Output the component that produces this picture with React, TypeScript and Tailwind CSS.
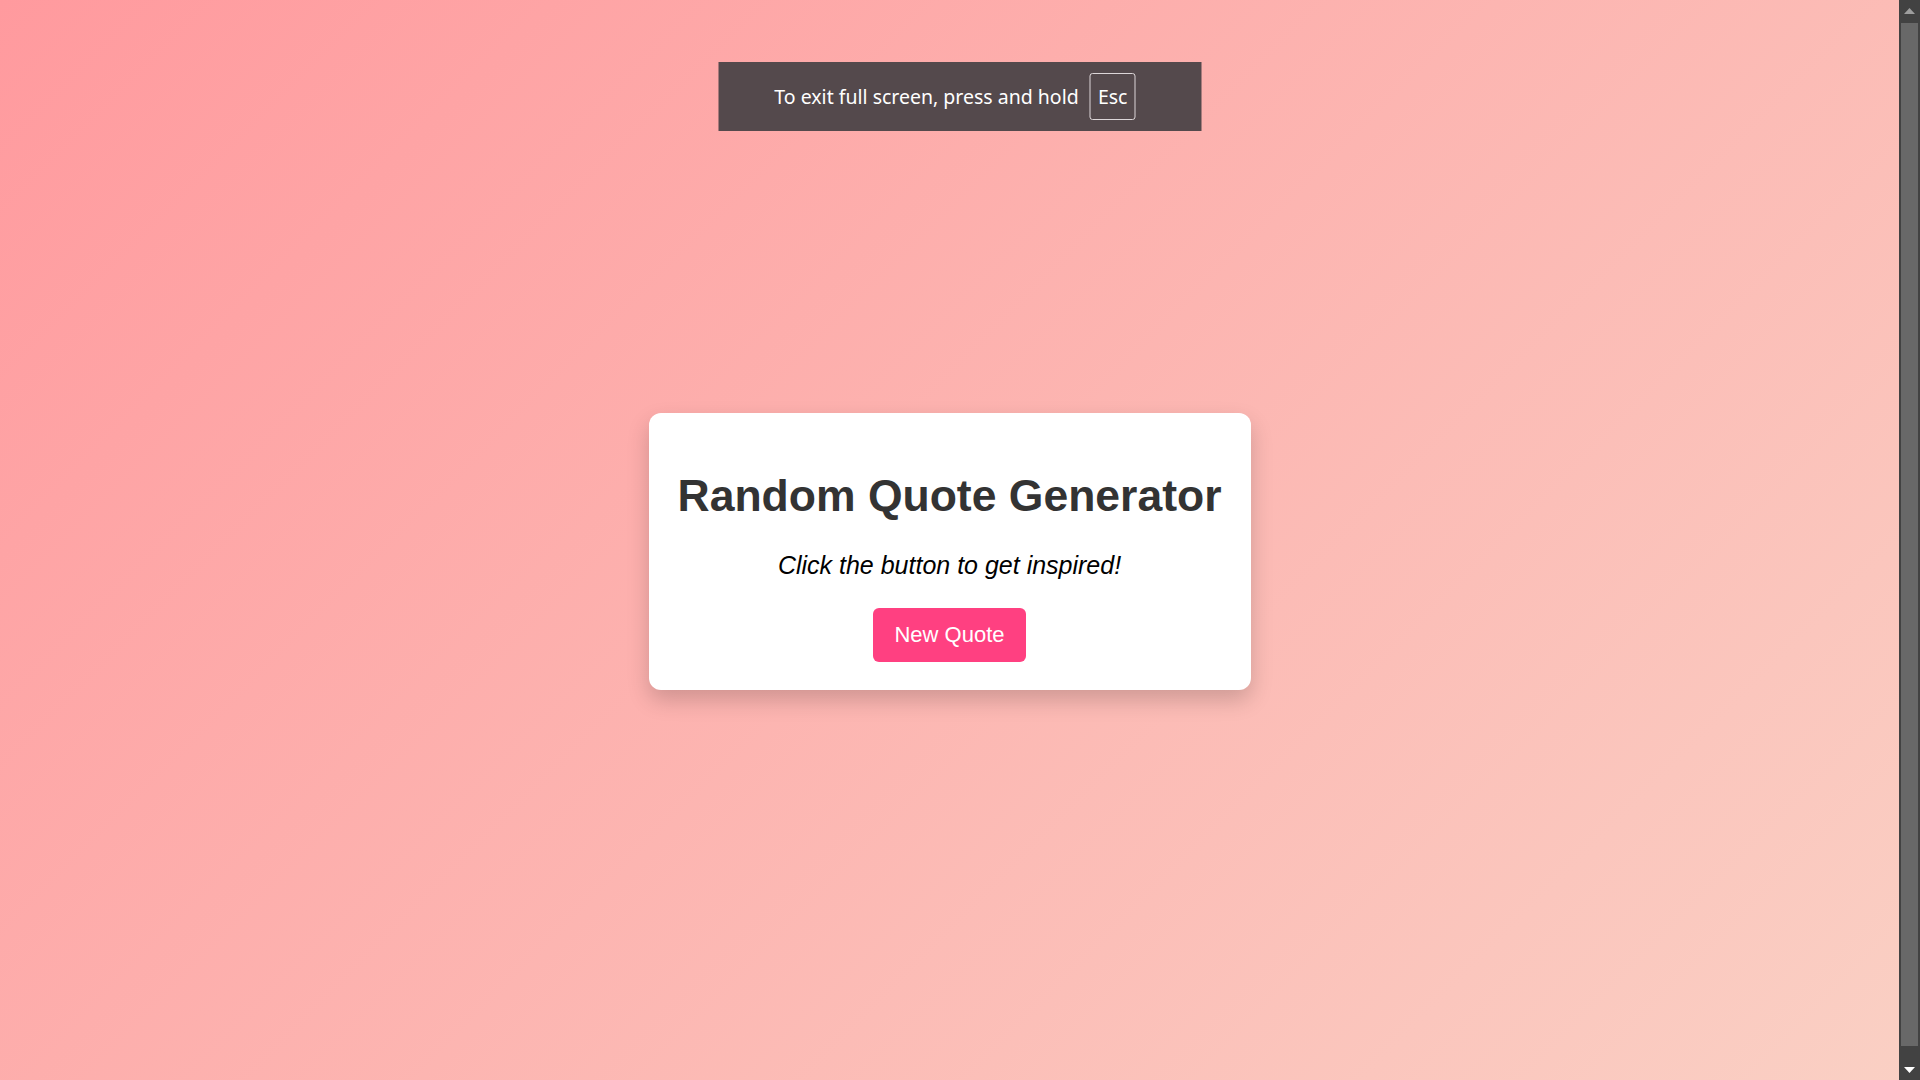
import React, { useState } from 'react';

const quotes = [
  { text: "The best way to get started is to quit talking and begin doing.", author: "Walt Disney" },
  { text: "Don't let yesterday take up too much of today.", author: "Will Rogers" },
  { text: "It's not whether you get knocked down, it's whether you get up.", author: "Vince Lombardi" },
  { text: "If you are working on something exciting, it will keep you motivated.", author: "Steve Jobs" },
];

// browser fullscreen notice drawn over the page
const FullscreenNotice: React.FC = () => (
  <div className="absolute left-1/2 top-[62px] -translate-x-1/2 w-[483px] h-[69px] bg-[#54494c] flex items-center justify-center gap-[11px] pr-[10px] font-['Noto_Sans',sans-serif] text-[19.5px] text-white">
    <span>To exit full screen, press and hold</span>
    <span className="w-[46px] h-[47px] border border-[#dcd6d8] rounded-[3px] flex items-center justify-center">Esc</span>
  </div>
);

const Scrollbar: React.FC = () => (
  <div className="w-[21px] h-full bg-[#424242] flex flex-col shrink-0">
    <div className="h-[21px] flex items-center justify-center">
      <svg width="11" height="6" viewBox="0 0 11 6"><path d="M5.5 0L11 6H0z" fill="#9e9e9e" /></svg>
    </div>
    <div className="flex-1 px-[2px] pt-[2px] pb-[13px]">
      <div className="h-full bg-[#686868]" />
    </div>
    <div className="h-[21px] flex items-center justify-center">
      <svg width="11" height="6" viewBox="0 0 11 6"><path d="M0 0H11L5.5 6z" fill="#ffffff" /></svg>
    </div>
  </div>
);

const App: React.FC = () => {
  const [quote, setQuote] = useState<{ text: string; author: string } | null>(null);

  const newQuote = () => {
    setQuote(quotes[Math.floor(Math.random() * quotes.length)]);
  };

  return (
    <div className="relative h-screen w-full flex overflow-hidden font-['Liberation_Sans',Arial,sans-serif]">
      <div className="flex-1 overflow-hidden">
        <div className="h-[1102px] bg-[linear-gradient(135deg,#ff9a9e_0%,#fad0c4_100%)] flex items-center justify-center">
          <div className="w-[602px] bg-white rounded-[12px] shadow-[0_10px_22px_rgba(0,0,0,0.18)] pt-[57px] pb-[28px] px-[20px] flex flex-col items-center text-center">
            <h1 className="text-[44.5px] leading-[52px] font-bold text-[#333333] whitespace-nowrap">Random Quote Generator</h1>
            <p className="mt-[28px] text-[25px] leading-[30px] italic text-black">
              {quote ? `“${quote.text}” — ${quote.author}` : 'Click the button to get inspired!'}
            </p>
            <button
              onClick={newQuote}
              className="mt-[28px] h-[54px] px-[21px] rounded-[6px] bg-[#ff4081] text-white text-[22px] leading-[25px] cursor-pointer"
            >
              New Quote
            </button>
          </div>
        </div>
      </div>
      <Scrollbar />
      <FullscreenNotice />
    </div>
  );
};

export default App;
